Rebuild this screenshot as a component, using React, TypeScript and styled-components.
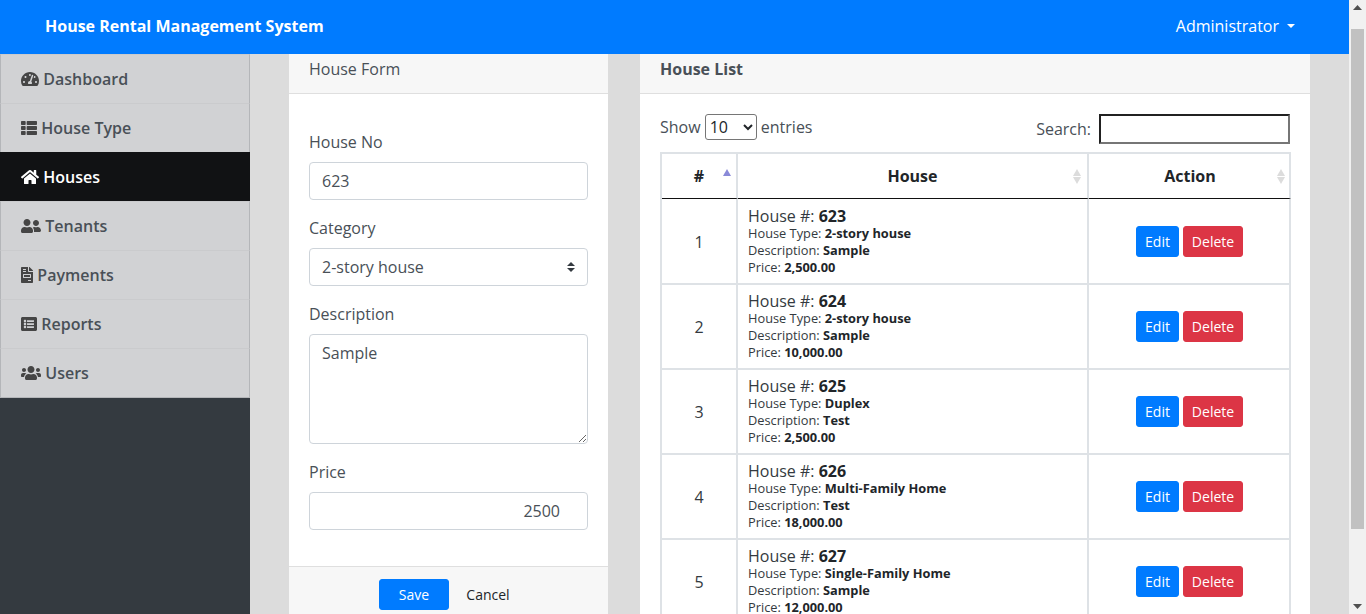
import React from 'react';
import styled, { createGlobalStyle } from 'styled-components';
import {
    FaTachometerAlt,
    FaThList,
    FaHome,
    FaUserFriends,
    FaFileInvoice,
    FaListAlt,
    FaUsers,
} from 'react-icons/fa';

const houses = [
    { no: '623', type: '2-story house', description: 'Sample', price: '2,500.00' },
    { no: '624', type: '2-story house', description: 'Sample', price: '10,000.00' },
    { no: '625', type: 'Duplex', description: 'Test', price: '2,500.00' },
    { no: '626', type: 'Multi-Family Home', description: 'Test', price: '18,000.00' },
    { no: '627', type: 'Single-Family Home', description: 'Sample', price: '12,000.00' },
];

const navItems = [
    { label: 'Dashboard', icon: <FaTachometerAlt />, iconWidth: 18 },
    { label: 'House Type', icon: <FaThList />, iconWidth: 16 },
    { label: 'Houses', icon: <FaHome />, iconWidth: 18, active: true },
    { label: 'Tenants', icon: <FaUserFriends />, iconWidth: 20 },
    { label: 'Payments', icon: <FaFileInvoice />, iconWidth: 12 },
    { label: 'Reports', icon: <FaListAlt />, iconWidth: 16 },
    { label: 'Users', icon: <FaUsers />, iconWidth: 20 },
];

function SortIcon({ active, right }: { active?: boolean; right: number }) {
    return (
        <SortMark right={right} width="8" height="15" viewBox="0 0 8 15">
            <path d="M4 0l4 7H0z" fill={active ? '#8a8ad8' : '#dcdcdc'} />
            {!active && <path d="M4 15L0 8h8z" fill="#dcdcdc" />}
        </SortMark>
    );
}

function App() {
    return (
        <Page>
            <GlobalStyle />
            <Viewport>
                <Navbar>
                    <Brand>House Rental Management System</Brand>
                    <UserMenu>
                        Administrator
                        <Caret />
                    </UserMenu>
                </Navbar>
                <Body>
                    <Sidebar>
                        {navItems.map((item) => (
                            <NavItem key={item.label} active={item.active} iconWidth={item.iconWidth}>
                                {item.icon}
                                <span>{item.label}</span>
                            </NavItem>
                        ))}
                    </Sidebar>
                    <Main>
                        <FormCard>
                            <CardHeader>House Form</CardHeader>
                            <FormBody>
                                <FormGroup>
                                    <Label>House No</Label>
                                    <Input defaultValue="623" />
                                </FormGroup>
                                <FormGroup>
                                    <Label>Category</Label>
                                    <Select defaultValue="2-story house">
                                        <option>2-story house</option>
                                        <option>Duplex</option>
                                        <option>Multi-Family Home</option>
                                        <option>Single-Family Home</option>
                                    </Select>
                                </FormGroup>
                                <FormGroup>
                                    <Label>Description</Label>
                                    <TextArea defaultValue="Sample" />
                                </FormGroup>
                                <FormGroup>
                                    <Label>Price</Label>
                                    <PriceInput defaultValue="2500" />
                                </FormGroup>
                            </FormBody>
                            <CardFooter>
                                <SaveButton>Save</SaveButton>
                                <CancelButton>Cancel</CancelButton>
                            </CardFooter>
                        </FormCard>
                        <ListCard>
                            <ListHeader>House List</ListHeader>
                            <ListBody>
                                <TableTools>
                                    <ToolLabel>
                                        Show
                                        <EntriesSelect defaultValue="10">
                                            <option>10</option>
                                            <option>25</option>
                                            <option>50</option>
                                        </EntriesSelect>
                                        entries
                                    </ToolLabel>
                                    <SearchLabel>
                                        Search:
                                        <SearchInput />
                                    </SearchLabel>
                                </TableTools>
                                <Table>
                                    <thead>
                                        <tr>
                                            <HeadCell width="76">
                                                #<SortIcon active right={5} />
                                            </HeadCell>
                                            <HeadCell width="351">
                                                House
                                                <SortIcon right={6} />
                                            </HeadCell>
                                            <ActionHead>
                                                Action
                                                <SortIcon right={4} />
                                            </ActionHead>
                                        </tr>
                                    </thead>
                                    <tbody>
                                        {houses.map((house, index) => (
                                            <tr key={house.no}>
                                                <NumberCell>{index + 1}</NumberCell>
                                                <InfoCell>
                                                    <HouseTitle>
                                                        House #: <b>{house.no}</b>
                                                    </HouseTitle>
                                                    <Detail>
                                                        House Type: <b>{house.type}</b>
                                                    </Detail>
                                                    <Detail>
                                                        Description: <b>{house.description}</b>
                                                    </Detail>
                                                    <Detail>
                                                        Price: <b>{house.price}</b>
                                                    </Detail>
                                                </InfoCell>
                                                <ActionCell>
                                                    <ActionGroup>
                                                        <SmallButton width={43}>Edit</SmallButton>
                                                        <SmallButton width={60} danger>
                                                            Delete
                                                        </SmallButton>
                                                    </ActionGroup>
                                                </ActionCell>
                                            </tr>
                                        ))}
                                    </tbody>
                                </Table>
                            </ListBody>
                        </ListCard>
                    </Main>
                </Body>
            </Viewport>
            <Scrollbar>
                <ScrollArrow viewBox="0 0 17 17">
                    <path d="M8.5 5L13 10H4z" fill="#505050" />
                </ScrollArrow>
                <ScrollTrack>
                    <ScrollThumb />
                </ScrollTrack>
                <ScrollArrow viewBox="0 0 17 17">
                    <path d="M8.5 12L4 7h9z" fill="#505050" />
                </ScrollArrow>
            </Scrollbar>
        </Page>
    );
}

const GlobalStyle = createGlobalStyle`
    html, body {
        margin: 0;
        height: 100%;
        overflow: hidden;
    }
    body {
        font-family: 'Open Sans', sans-serif;
        font-size: 16px;
        line-height: 24px;
        color: #212529;
    }
    * {
        box-sizing: border-box;
    }
`;

const Page = styled.div`
    display: flex;
    height: 614px;
    overflow: hidden;
`;

const Viewport = styled.div`
    flex: 1;
    min-width: 0;
    display: flex;
    flex-direction: column;
`;

const Navbar = styled.header`
    flex: none;
    height: 54px;
    background: #007bff;
    color: #fff;
    display: flex;
    align-items: center;
    justify-content: space-between;
    padding: 0 54px 2px 45px;
`;

const Brand = styled.div`
    font-weight: 700;
`;

const UserMenu = styled.div`
    display: flex;
    align-items: center;
`;

const Caret = styled.span`
    margin-left: 8px;
    border-top: 4.8px solid #fff;
    border-left: 4.8px solid transparent;
    border-right: 4.8px solid transparent;
`;

const Body = styled.div`
    flex: 1;
    min-height: 0;
    display: flex;
`;

const Sidebar = styled.nav`
    flex: none;
    width: 250px;
    background: #343a40;
`;

const NavItem = styled.div<{ active?: boolean; iconWidth: number }>`
    height: 49px;
    display: flex;
    align-items: center;
    gap: 4.3px;
    padding-left: 20px;
    font-weight: 600;
    background: ${(props) => (props.active ? '#111214' : '#d1d2d4')};
    color: ${(props) => (props.active ? '#fff' : '#495057')};
    border-style: solid;
    border-width: 1px 1px 0;
    border-color: ${(props) => (props.active ? '#111214' : '#cacbcd #b4b6b9')};
    &:last-child {
        height: 50px;
        border-bottom: 1px solid #b4b6b9;
    }
    svg {
        flex: none;
        width: ${(props) => props.iconWidth}px;
        height: 16px;
        color: ${(props) => (props.active ? '#fff' : '#454545')};
    }
`;

const Main = styled.main`
    flex: 1;
    min-width: 0;
    overflow: hidden;
    background: #dcdcdc;
    display: flex;
    align-items: flex-start;
    gap: 32px;
    padding: 0 39px;
`;

const FormCard = styled.section`
    flex: none;
    width: 319px;
    background: #fff;
`;

const ListCard = styled.section`
    flex: 1;
    min-width: 0;
    background: #fff;
`;

const CardHeader = styled.div`
    height: 40px;
    padding: 3px 20px 0;
    background: #f7f7f7;
    border-bottom: 1px solid #dfdfdf;
    color: #495057;
`;

const ListHeader = styled(CardHeader)`
    font-weight: 700;
`;

const FormBody = styled.div`
    padding: 36px 20px 20px;
`;

const FormGroup = styled.div`
    margin-bottom: 16px;
`;

const Label = styled.label`
    display: block;
    margin-bottom: 8px;
    color: #495057;
`;

const Input = styled.input`
    display: block;
    width: 100%;
    height: 38px;
    padding: 6px 12px;
    font: inherit;
    color: #495057;
    background: #fff;
    border: 1px solid #ced4da;
    border-radius: 4px;
`;

const PriceInput = styled(Input)`
    text-align: right;
    padding-right: 27px;
`;

const Select = styled.select`
    display: block;
    width: 100%;
    height: 38px;
    padding: 6px 28px 6px 12px;
    font: inherit;
    color: #495057;
    appearance: none;
    background: #fff
        url("data:image/svg+xml,%3csvg xmlns='http://www.w3.org/2000/svg' width='4' height='5' viewBox='0 0 4 5'%3e%3cpath fill='%23343a40' d='M2 0L0 2h4zm0 5L0 3h4z'/%3e%3c/svg%3e")
        no-repeat right 12px center / 8px 10px;
    border: 1px solid #ced4da;
    border-radius: 4px;
`;

const TextArea = styled.textarea`
    display: block;
    width: 100%;
    height: 110px;
    padding: 6px 12px;
    font: inherit;
    color: #495057;
    border: 1px solid #ced4da;
    border-radius: 4px;
`;

const CardFooter = styled.div`
    display: flex;
    align-items: flex-start;
    justify-content: center;
    gap: 4px;
    padding: 12px 15px 12px 20px;
    background: #f7f7f7;
    border-top: 1px solid #dfdfdf;
`;

const SaveButton = styled.button`
    width: 70px;
    height: 31px;
    padding: 0;
    font: inherit;
    font-size: 14px;
    color: #fff;
    background: #007bff;
    border: 1px solid #007bff;
    border-radius: 3px;
`;

const CancelButton = styled.button`
    width: 70px;
    height: 31px;
    padding: 0;
    font: inherit;
    font-size: 14px;
    color: #212529;
    background: transparent;
    border: 1px solid transparent;
`;

const ListBody = styled.div`
    padding: 20px;
`;

const TableTools = styled.div`
    display: flex;
    align-items: flex-start;
    justify-content: space-between;
    height: 38px;
`;

const ToolLabel = styled.label`
    display: flex;
    align-items: center;
    gap: 4.1px;
    height: 26px;
    color: #495057;
`;

const SearchLabel = styled(ToolLabel)`
    height: 30px;
    gap: 8px;
`;

const EntriesSelect = styled.select`
    width: 52px;
    height: 26px;
    font: inherit;
    color: #212529;
    background: #fff;
    border: 1px solid #767676;
    border-radius: 3px;
`;

const SearchInput = styled.input`
    width: 191px;
    height: 30px;
    padding: 1px 2px;
    font: inherit;
    background: #fff;
`;

const Table = styled.table`
    width: 631px;
    table-layout: fixed;
    border-collapse: separate;
    border-spacing: 0;
    border-top: 2px solid #dee2e6;
    border-left: 2px solid #dee2e6;
    color: #343a40;
    b {
        font-weight: 700;
        color: #212529;
    }
`;

const HeadCell = styled.th`
    position: relative;
    height: 45px;
    padding: 0;
    text-align: center;
    font-weight: 700;
    color: #212529;
    border-right: 2px solid #dee2e6;
    border-bottom: 1px solid #111;
`;

const ActionHead = styled(HeadCell)`
    padding-left: 2px;
`;

const SortMark = styled.svg<{ right: number }>`
    position: absolute;
    right: ${(props) => props.right}px;
    top: 15px;
`;

const BodyCell = styled.td`
    height: 85px;
    padding: 0;
    vertical-align: middle;
    border-right: 2px solid #dee2e6;
    border-bottom: 2px solid #dee2e6;
    tr:first-child > & {
        height: 86px;
        padding-top: 1px;
    }
`;

const NumberCell = styled(BodyCell)`
    text-align: center;
`;

const InfoCell = styled(BodyCell)`
    padding-left: 10px;
    padding-right: 10px;
`;

const ActionCell = styled(BodyCell)`
    padding-left: 1px;
`;

const ActionGroup = styled.div`
    display: flex;
    justify-content: center;
    gap: 4px;
`;

const HouseTitle = styled.div`
    line-height: 17px;
`;

const Detail = styled.div`
    font-size: 12.8px;
    line-height: 17px;
`;

const SmallButton = styled.button<{ danger?: boolean; width: number }>`
    width: ${(props) => props.width}px;
    height: 31px;
    padding: 0;
    font-family: inherit;
    font-size: 14px;
    line-height: 21px;
    color: #fff;
    background: ${(props) => (props.danger ? '#dc3545' : '#007bff')};
    border: 1px solid ${(props) => (props.danger ? '#dc3545' : '#007bff')};
    border-radius: 3px;
`;

const Scrollbar = styled.div`
    flex: none;
    width: 17px;
    display: flex;
    flex-direction: column;
    background: #f1f1f1;
`;

const ScrollArrow = styled.svg`
    flex: none;
    width: 17px;
    height: 17px;
`;

const ScrollTrack = styled.div`
    flex: 1;
    padding: 12px 2px 0;
`;

const ScrollThumb = styled.div`
    height: 500px;
    background: #c1c1c1;
`;

export default App;
